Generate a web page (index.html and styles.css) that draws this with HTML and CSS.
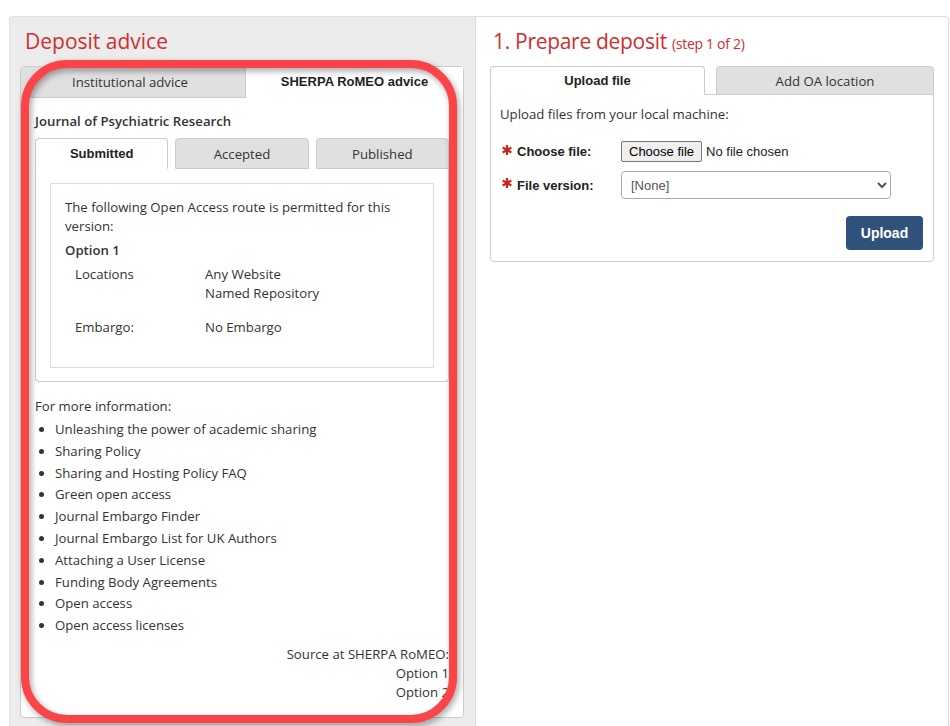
FILE: index.html
```html
<!DOCTYPE html>
<html lang="en">
<head>
    <meta charset="UTF-8">
    <meta name="viewport" content="width=device-width, initial-scale=1.0">
    <link rel="stylesheet" href="styles.css">
</head>
<body>

<div class="page">
    <div class="col col-advice">
        <h2 class="heading">Deposit advice</h2>
        <div class="card">
            <div class="main-tabs">
                <div class="main-tab">Institutional advice</div>
                <div class="main-tab active">SHERPA RoMEO advice</div>
            </div>
            <div class="card-body">
                <div class="journal">Journal of Psychiatric Research</div>
                <div class="tabs">
                    <div class="tab active">Submitted</div>
                    <div class="tab">Accepted</div>
                    <div class="tab">Published</div>
                </div>
                <div class="tab-panel">
                    <div class="route">
                        <p>The following Open Access route is permitted for this version:</p>
                        <div class="option-title">Option 1</div>
                        <div class="term">
                            <div class="term-label">Locations</div>
                            <div class="term-value">Any Website<br>Named Repository</div>
                        </div>
                        <div class="term">
                            <div class="term-label">Embargo:</div>
                            <div class="term-value">No Embargo</div>
                        </div>
                    </div>
                </div>
                <p class="more">For more information:</p>
                <ul class="links">
                    <li>Unleashing the power of academic sharing</li>
                    <li>Sharing Policy</li>
                    <li>Sharing and Hosting Policy FAQ</li>
                    <li>Green open access</li>
                    <li>Journal Embargo Finder</li>
                    <li>Journal Embargo List for UK Authors</li>
                    <li>Attaching a User License</li>
                    <li>Funding Body Agreements</li>
                    <li>Open access</li>
                    <li>Open access licenses</li>
                </ul>
                <div class="source">Source at SHERPA RoMEO:<br>Option 1<br>Option 2</div>
            </div>
        </div>
        <!-- marcador rojo encima de la tarjeta -->
        <div class="callout"></div>
    </div>

    <div class="col col-deposit">
        <h2 class="heading">1. Prepare deposit <small>(step 1 of 2)</small></h2>
        <div class="tabs form-tabs">
            <div class="tab active">Upload file</div>
            <div class="tab">Add OA location</div>
        </div>
        <div class="tab-panel upload-panel">
            <p class="intro">Upload files from your local machine:</p>
            <div class="form-row">
                <label class="form-label"><svg class="req" viewBox="0 0 10 10"><path d="M5 0v10M0.7 2.5l8.6 5M0.7 7.5l8.6-5"/></svg>Choose file:</label>
                <button type="button" class="file-btn">Choose file</button>
                <span class="file-name">No file chosen</span>
            </div>
            <div class="form-row">
                <label class="form-label"><svg class="req" viewBox="0 0 10 10"><path d="M5 0v10M0.7 2.5l8.6 5M0.7 7.5l8.6-5"/></svg>File version:</label>
                <select class="version-select">
                    <option>[None]</option>
                </select>
            </div>
            <div class="actions">
                <button class="btn-upload">Upload</button>
            </div>
        </div>
    </div>
</div>

</body>
</html>
```

FILE: styles.css
```css
body {
    margin: 0;
    background: #fff;
    color: #333;
    font-family: 'Open Sans', sans-serif;
    font-size: 13.2px;
}

.page {
    display: flex;
    padding: 16px 0 0 9px;
}

.col {
    box-sizing: border-box;
    min-height: 720px;
}

.col-advice {
    position: relative;
    width: 466px;
    background: #ececec;
    border: 1px solid #e0e0e0;
    border-right: none;
    border-bottom: none;
    border-radius: 4px 0 0 0;
    padding: 0 11px 10px 10px;
}

.col-deposit {
    width: 474px;
    background: #fff;
    border: 1px solid #ddd;
    border-bottom: none;
    border-radius: 0 4px 0 0;
    padding: 0 14px;
}

.heading {
    height: 30px;
    margin: 9px 0 10px 5px;
    font-size: 21px;
    line-height: 30px;
    font-weight: normal;
    color: #cf2e2e;
}

.col-deposit .heading {
    margin-left: 3px;
    letter-spacing: -0.3px;
}

.heading small {
    font-size: 14px;
    line-height: 1;
}

/* tarjeta izquierda */
.card {
    background: #fff;
    border: 1px solid #ccc;
    border-radius: 4px;
}

.main-tabs {
    display: flex;
    height: 31px;
}

.main-tab {
    flex: 0 0 225px;
    box-sizing: border-box;
    background: #e0e0e0;
    border-right: 1px solid #ccc;
    border-bottom: 1px solid #ccc;
    border-radius: 3px 0 0 0;
    padding-right: 6px;
    text-align: center;
    line-height: 30px;
    color: #333;
}

.main-tab.active {
    flex: 1;
    background: #fff;
    border: none;
    padding: 0;
    font-family: 'Liberation Sans', Arial, sans-serif;
    font-size: 13px;
    font-weight: bold;
    color: #222;
}

.card-body {
    padding: 14px 14px 15px;
}

.journal {
    line-height: 19px;
    font-weight: 600;
    margin-bottom: 7px;
}

.tabs {
    display: flex;
    gap: 7px;
    height: 31px;
}

.tab {
    flex: 1;
    box-sizing: border-box;
    background: #e0e0e0;
    border: 1px solid #ccc;
    border-radius: 4px 4px 0 0;
    text-align: center;
    line-height: 30px;
    color: #333;
}

.tab.active {
    background: #fff;
    border-bottom-color: #fff;
    font-family: 'Liberation Sans', Arial, sans-serif;
    font-size: 13px;
    font-weight: bold;
    color: #222;
}

.tab-panel {
    border: 1px solid #ccc;
    border-top: none;
    border-radius: 0 0 4px 4px;
    padding: 14px 14px 13px;
}

.route {
    border: 1px solid #ddd;
    padding: 14px 14px 30px;
    line-height: 19px;
}

.route p {
    margin: 0;
}

.option-title {
    font-weight: 600;
    margin: 5px 0;
}

.term {
    display: flex;
    padding-left: 10px;
}

.term + .term {
    margin-top: 15px;
}

.term-label {
    width: 130px;
}

.more {
    margin: 15px 0 3px;
    line-height: 19px;
}

.links {
    margin: 0 0 8px;
    padding-left: 20px;
    line-height: 21.8px;
}

.source {
    text-align: right;
    line-height: 19px;
}

.callout {
    position: absolute;
    left: 11px;
    top: 43px;
    width: 436px;
    height: 663px;
    box-sizing: border-box;
    border: 8px solid #fb4447;
    border-radius: 46px;
    filter: drop-shadow(2px 3px 3px rgba(0, 0, 0, 0.35));
    pointer-events: none;
}

/* formulario derecho */
.form-tabs {
    gap: 11px;
    height: 29px;
}

.form-tabs .tab {
    line-height: 28px;
}

.form-tabs .tab:first-child {
    flex: 0 0 215px;
}

.form-tabs .tab.active {
    position: relative;
    z-index: 1;
}

.upload-panel {
    border-top: 1px solid #ccc;
    margin-top: -1px;
    padding: 10px 10px 11px 9px;
    font-family: 'Liberation Sans', Arial, sans-serif;
    font-size: 13px;
}

.intro {
    margin: 0 0 17px 0;
    line-height: 19px;
    font-family: 'Open Sans', sans-serif;
    font-size: 13.2px;
}

.form-row {
    display: flex;
    align-items: center;
    margin-bottom: 9px;
}

.form-label {
    width: 121px;
    font-weight: bold;
    color: #222;
    display: flex;
    align-items: center;
}

.req {
    width: 10px;
    height: 10px;
    margin: 0 5px 4px 2px;
    stroke: #d0201e;
    stroke-width: 2.2;
    fill: none;
}

.file-btn {
    height: 21px;
    padding: 0 7px;
    background: #efefef;
    border: 1px solid #767676;
    border-radius: 2px;
    font-family: 'Liberation Sans', Arial, sans-serif;
    font-size: 13px;
    color: #000;
}

.file-name {
    margin-left: 4px;
    color: #222;
}

.version-select {
    width: 270px;
    height: 28px;
    border: 1px solid #aaa;
    border-radius: 4px;
    padding-left: 5px;
    font-family: 'Liberation Sans', Arial, sans-serif;
    font-size: 13px;
    color: #555;
    background: #fff;
}

.actions {
    display: flex;
    justify-content: flex-end;
    margin-top: 17px;
}

.btn-upload {
    width: 77px;
    height: 34px;
    background: #30527a;
    color: #fff;
    border: none;
    border-radius: 4px;
    font-family: 'Liberation Sans', Arial, sans-serif;
    font-size: 14px;
    font-weight: bold;
}
```
